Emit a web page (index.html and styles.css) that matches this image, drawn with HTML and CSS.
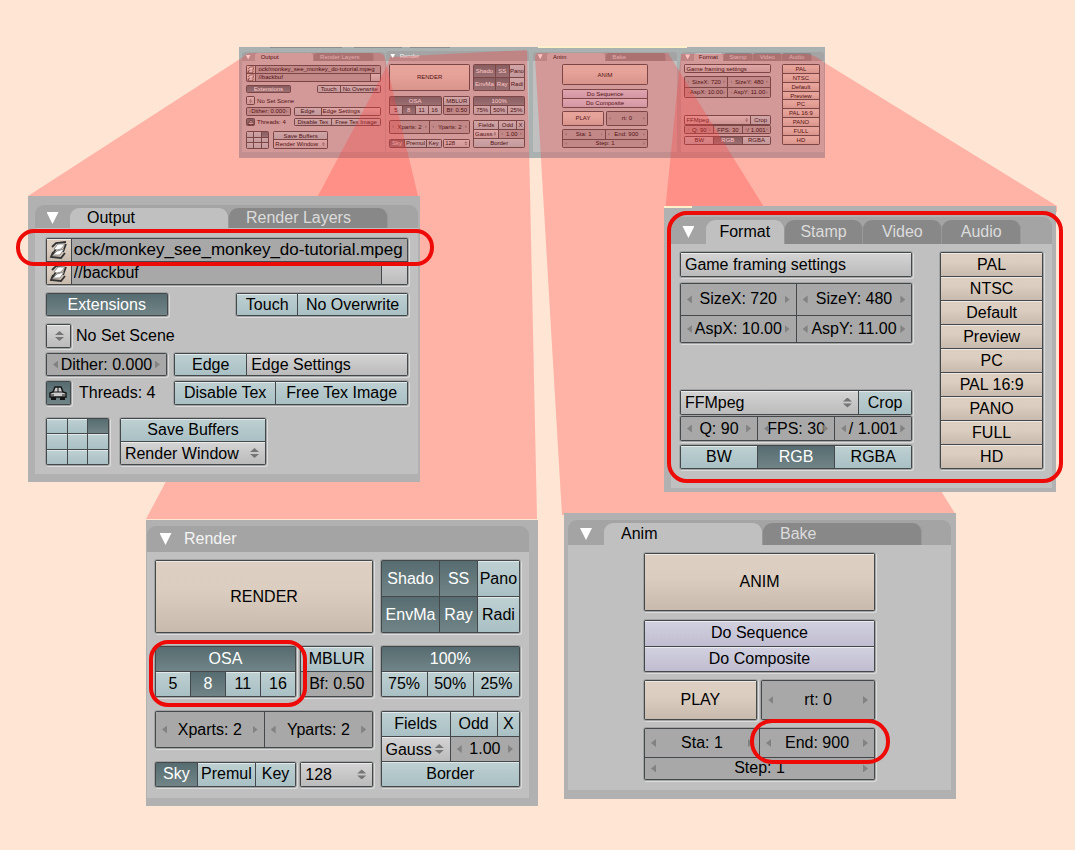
FILE: index.html
```html
<!DOCTYPE html>
<html lang="en">
<head>
<meta charset="utf-8">
<title>Render buttons overview</title>
<link rel="stylesheet" href="styles.css">
</head>
<body>
<main class="scene">
  <div class="strip"></div>

  <svg class="layer" width="1075" height="850" aria-hidden="true">
    <rect x="538" y="46" width="149" height="2" fill="#fff0cc"/>
    <path d="M270 47.500H342M354 47.500H402M410 47.500H450" stroke="#8e8e8e"/>
    <g fill="#ff4040" fill-opacity=".3">
      <path d="M28 196 243 57Q246 53 252 53L378 53Q384 53 385 58L418 196V205H28Z"/>
      <path d="M390 57 527 50 537 519H146L387 66Z"/>
      <path d="M535 57Q535 53 540 53H668L956 515H562Z"/>
      <path d="M681 54 806 54Q816 55 825 63L1057 206V212H665L679 72Z"/>
    </g>
  </svg>

  <section class="callout at-output">
    <div class="panel output">
      <div class="head tabs">
        <button class="fold" aria-label="Collapse"></button>
        <button class="tab on">Output</button>
        <button class="tab">Render Layers</button>
      </div>
      <div class="body">
        <div class="group paths">
          <button class="sand" aria-label="Browse output"><svg class="icon" viewBox="0 0 20 20"><path d="M3 7 7 3 17 2M4 12 2 17 12 18 16 13M3 15 7 9M17 4 14 12" fill="none" stroke="#333" stroke-width="1.800"/><path d="M5 9 9 4 16 4 12 9 8 10zM4 15 8 11 15 9 11 15z" fill="#fff" stroke="#777" stroke-width=".8"/></svg></button>
          <input class="field path" aria-label="Output path" value="ock/monkey_see_monkey_do-tutorial.mpeg">
          <button class="sand" aria-label="Browse backbuf"><svg class="icon" viewBox="0 0 20 20"><path d="M3 7 7 3 17 2M4 12 2 17 12 18 16 13M3 15 7 9M17 4 14 12" fill="none" stroke="#333" stroke-width="1.800"/><path d="M5 9 9 4 16 4 12 9 8 10zM4 15 8 11 15 9 11 15z" fill="#fff" stroke="#777" stroke-width=".8"/></svg></button>
          <input class="field" aria-label="Backbuf path" value="//backbuf">
          <button class="menu" aria-label="Use backbuf"></button>
        </div>
        <div class="row ext">
          <div class="group"><button class="on">Extensions</button></div>
          <div class="group c-touch"><button>Touch</button><button>No Overwrite</button></div>
        </div>
        <div class="row scene-row">
          <div class="group"><button class="menu updown" aria-label="Choose scene"></button></div>
          <span class="note">No Set Scene</span>
        </div>
        <div class="row pair">
          <div class="group"><span class="num wide"><input aria-label="Dither" value="Dither: 0.000"></span></div>
          <div class="group c-edge"><button>Edge</button><button class="menu left">Edge Settings</button></div>
        </div>
        <div class="row pair">
          <div class="row threads">
            <div class="group"><button class="on" aria-label="Auto threads"><svg class="icon" viewBox="0 0 20 20"><path d="M5 9 7 4h6l2 5 3 1v4H2v-4z" fill="#ccc" stroke="#151515" stroke-width="1.500"/><path d="M10 4v5M5 9h10M3 12h3M14 12h3" stroke="#151515"/><path d="M3 14h5v3H3zM12 14h5v3h-5z" fill="#151515"/></svg></button></div>
            <span class="note">Threads: 4</span>
          </div>
          <div class="group c-tex"><button>Disable Tex</button><button>Free Tex Image</button></div>
        </div>
        <div class="row last">
          <div class="group nine">
            <button aria-label="Top left"></button><button aria-label="Top"></button><button class="on" aria-label="Top right"></button>
            <button aria-label="Left"></button><button aria-label="Centre"></button><button aria-label="Right"></button>
            <button aria-label="Bottom left"></button><button aria-label="Bottom"></button><button aria-label="Bottom right"></button>
          </div>
          <div class="group">
            <button>Save Buffers</button>
            <span class="menu updown"><select aria-label="Display"><option>Render Window</option></select></span>
          </div>
        </div>
      </div>
    </div>
  </section>

  <section class="callout at-render">
    <div class="panel render">
      <div class="head plain">
        <button class="fold" aria-label="Collapse"></button>
        <span class="title">Render</span>
      </div>
      <div class="body">
        <div class="row halves">
          <div class="group"><button class="sand">RENDER</button></div>
          <div class="group c-opts">
            <button class="on">Shado</button><button class="on">SS</button><button>Pano</button>
            <button class="on">EnvMa</button><button class="on">Ray</button><button>Radi</button>
          </div>
        </div>
        <div class="row halves">
          <div class="row osa-row">
            <div class="group osa"><button class="on all">OSA</button><button>5</button><button class="on">8</button><button>11</button><button>16</button></div>
            <div class="group"><button>MBLUR</button><span class="num flat"><input aria-label="Blur factor" value="Bf: 0.50"></span></div>
          </div>
          <div class="group thirds"><button class="on all">100%</button><button>75%</button><button>50%</button><button>25%</button></div>
        </div>
        <div class="row halves">
          <div class="stack">
            <div class="group two"><span class="num"><input aria-label="X parts" value="Xparts: 2"></span><span class="num"><input aria-label="Y parts" value="Yparts: 2"></span></div>
            <div class="row osa-row">
              <div class="group c-sky"><button class="on">Sky</button><button>Premul</button><button>Key</button></div>
              <div class="group"><span class="menu updown"><select aria-label="Octree"><option>128</option></select></span></div>
            </div>
          </div>
          <div class="group c-fields">
            <button>Fields</button><button>Odd</button><button>X</button>
            <span class="menu updown"><select aria-label="Filter"><option>Gauss</option></select></span>
            <span class="num filter"><input aria-label="Filter size" value="1.00"></span>
            <button class="all">Border</button>
          </div>
        </div>
      </div>
    </div>
  </section>

  <section class="callout at-anim">
    <div class="panel anim">
      <div class="head tabs">
        <button class="fold" aria-label="Collapse"></button>
        <button class="tab on">Anim</button>
        <button class="tab">Bake</button>
      </div>
      <div class="body">
        <div class="group"><button class="sand">ANIM</button></div>
        <div class="group"><button class="lilac">Do Sequence</button><button class="lilac">Do Composite</button></div>
        <div class="row play">
          <div class="group"><button class="sand">PLAY</button></div>
          <div class="group"><span class="num"><input aria-label="rt" value="rt: 0"></span></div>
        </div>
        <div class="group frames">
          <span class="num"><input aria-label="Start frame" value="Sta: 1"></span>
          <span class="num"><input aria-label="End frame" value="End: 900"></span>
          <span class="num all"><input aria-label="Step" value="Step: 1"></span>
        </div>
      </div>
    </div>
  </section>

  <section class="callout at-format">
    <div class="panel format">
      <div class="head tabs">
        <button class="fold" aria-label="Collapse"></button>
        <button class="tab on">Format</button>
        <button class="tab">Stamp</button>
        <button class="tab">Video</button>
        <button class="tab">Audio</button>
      </div>
      <div class="body">
        <div class="sizes">
          <div class="group"><button class="menu left">Game framing settings</button></div>
          <div class="group dims">
            <span class="num"><input aria-label="Size X" value="SizeX: 720"></span><span class="num"><input aria-label="Size Y" value="SizeY: 480"></span>
            <span class="num"><input aria-label="Aspect X" value="AspX: 10.00"></span><span class="num"><input aria-label="Aspect Y" value="AspY: 11.00"></span>
          </div>
          <div class="group c-codec"><span class="menu updown"><select aria-label="Codec"><option>FFMpeg</option></select></span><button>Crop</button></div>
          <div class="group thirds"><span class="num"><input aria-label="Quality" value="Q: 90"></span><span class="num"><input aria-label="Frames per second" value="FPS: 30"></span><span class="num"><input aria-label="Frame base" value="/ 1.001"></span></div>
          <div class="group thirds"><button>BW</button><button class="on">RGB</button><button>RGBA</button></div>
        </div>
        <div class="group presets">
          <button class="sand">PAL</button><button class="sand">NTSC</button><button class="sand">Default</button>
          <button class="sand">Preview</button><button class="sand">PC</button><button class="sand">PAL 16:9</button>
          <button class="sand">PANO</button><button class="sand">FULL</button><button class="sand">HD</button>
        </div>
      </div>
    </div>
  </section>

  <svg class="layer" width="1075" height="850" aria-hidden="true">
    <path d="M664 207H692" stroke="#fff0cc" stroke-width="2"/>
    <g fill="none" stroke="#ee0a06" stroke-width="4">
      <rect x="18" y="231" width="414" height="33" rx="16"/>
      <rect x="151" y="642" width="154" height="63" rx="17"/>
      <rect x="752" y="721" width="136" height="41" rx="20"/>
      <rect x="669" y="213" width="392" height="268" rx="18"/>
    </g>
  </svg>
</main>
<script src="strip.js"></script>
</body>
</html>
```
FILE: styles.css
```css
* { box-sizing: border-box; }

body {
  margin: 0;
  background: #ffe5d4;
  color: #000;
}

button, input, select {
  font: inherit;
  color: inherit;
  border: 0;
  margin: 0;
  padding: 0;
  min-width: 0;
  min-height: 0;
  width: 100%;
  height: 100%;
  background: none;
  border-radius: 0;
  appearance: none;
}

button {
  overflow: hidden;
  white-space: nowrap;
}

.scene {
  position: relative;
  min-height: 850px;
  overflow: hidden;
  font-family: "Liberation Sans", Arial, sans-serif;
}

.layer {
  position: absolute;
  left: 0;
  top: 0;
  pointer-events: none;
}

/* Places on the canvas */
.callout {
  position: absolute;
  width: 392px;
  height: 286px;
  font-size: 16px;
  --line: 1px;
  --pad: 4px;
  --tab-pad: 17px;
  --tab-top: 3px;
  --radius: 9px;
  --arrow-w: 5px;
  --arrow-h: 8px;
  --arrow-in: 6px;
  --ud-w: 9px;
  --ud-h: 10px;
  --fold-w: 12px;
  --fold-h: 12px;
  --icon: 20px;
}
.at-output { left: 28px; top: 196px; }
.at-render { left: 146px; top: 520px; }
.at-anim { left: 564px; top: 513px; }
.at-format { left: 664px; top: 206px; }

.strip {
  position: absolute;
  left: 239px;
  top: 47px;
  width: 586px;
  height: 111px;
  padding: 2px 0 3px;
  display: grid;
  grid-template-columns: repeat(4, minmax(0, 1fr));
  background: #a9b1b1;
  font-size: 6px;
  --line: 1px;
  --pad: 1px;
  --tab-pad: 6px;
  --tab-top: 1px;
  --radius: 3px;
  --arrow-w: 2px;
  --arrow-h: 3px;
  --arrow-in: 2px;
  --ud-w: 3px;
  --ud-h: 4px;
  --fold-w: 5px;
  --fold-h: 5px;
  --icon: 8px;
}

/* Panel frame */
.panel {
  height: 100%;
  display: grid;
  background: #b1b1b1;
}
.strip .panel { background: #a9b1b1; }
.head { grid-area: 2 / 2; background: #a4a4a4; border-radius: var(--radius) var(--radius) 0 0; }
.body { grid-area: 3 / 2; background: #c0c0c0; display: grid; }

.output { grid-template: 9fr 23fr 246fr 8fr / 7fr 383fr 2fr; }
.render { grid-template: 6fr 26fr 246fr 8fr / 1fr 382fr 9fr; }
.anim { grid-template: 7fr 25fr 245fr 9fr / 4fr 383fr 5fr; }
.format { grid-template: 11fr 27fr 244fr 4fr / 7fr 382fr 4fr; }
.strip .format { grid-template-rows: 7fr 26fr 244fr 9fr; }
.panel, .panel * { min-width: 0; min-height: 0; }

.head { display: grid; }
.tabs { padding-top: var(--tab-top); }
.output .head { grid-template-columns: 35fr 159fr 159fr 30fr; }
.anim .head { grid-template-columns: 36fr 159fr 159fr 29fr; }
.format .head { grid-template-columns: 35fr 79fr 79fr 79fr 79fr 31fr; }
.render .head { grid-template-columns: 37fr 345fr; }
.plain { align-items: center; }

.fold::before {
  content: "";
  display: block;
  width: var(--fold-w);
  height: var(--fold-h);
  margin: 0 auto;
  background: #fff;
  clip-path: polygon(0 0, 100% 0, 50% 100%);
}
.tab {
  padding-left: var(--tab-pad);
  text-align: left;
  background: #888;
  color: #dcdcdc;
  border-radius: var(--radius) var(--radius) 0 0;
  border-right: var(--line) solid #999;
}
.tab.on { background: #c0c0c0; color: #000; }
.format .tab { padding: 0; text-align: center; }
.title { color: #f4f4f4; }

/* Controls */
.group {
  display: grid;
  grid-auto-rows: minmax(0, 1fr);
  gap: var(--line);
  padding: var(--line);
  background: #44484a;
  border-radius: 2px;
}
.callout .group { box-shadow: 0 0 0 1px #a2a4a4, 1px 1px 0 1px #dcdcdc; }

.group button { background: linear-gradient(#bed0d2, #a9c0c4); }
.group button.on { background: linear-gradient(#576c70, #718588); color: #fff; }
.group button.sand { background: linear-gradient(#ddd0c3, #dbcdc0 40%, #c8baac); }
.group button.lilac { background: linear-gradient(#d2d1e0, #bfbdcf); }
.group .menu { background: linear-gradient(#d4d4d4, #bbb); }
.callout .group button:not(.on), .callout .menu { box-shadow: inset 0 1px #ffffff88; }
.group .left { text-align: left; padding-left: var(--pad); }

.field {
  background: #a8a8a8;
  padding-left: 2px;
}
.num {
  position: relative;
  background: #a8a8a8;
}
.num input { text-align: center; display: block; }
.num::before, .num::after {
  content: "";
  position: absolute;
  top: 50%;
  width: var(--arrow-w);
  height: var(--arrow-h);
  margin-top: calc(var(--arrow-h) / -2);
  background: #828282;
}
.num::before { left: var(--arrow-in); clip-path: polygon(100% 0, 100% 100%, 0 50%); }
.num::after { right: var(--arrow-in); clip-path: polygon(0 0, 100% 50%, 0 100%); }
.flat::before, .flat::after { content: none; }

.menu { position: relative; }
.menu select { padding-left: var(--pad); display: block; }
.updown::after {
  content: "";
  position: absolute;
  top: 50%;
  right: var(--arrow-in);
  width: var(--ud-w);
  height: var(--ud-h);
  margin-top: calc(var(--ud-h) / -2);
  background: #757575;
  clip-path: polygon(50% 0, 100% 40%, 0 40%, 0 60%, 100% 60%, 50% 100%, 0 60%, 0 40%);
}
.icon { display: block; width: var(--icon); height: var(--icon); margin: 0 auto; }
.note { align-self: center; padding-left: var(--pad); white-space: nowrap; }
.all { grid-column: 1 / -1; }
.row { display: grid; }

/* Output */
.output .body {
  grid-template: 10fr 47fr 8fr 23fr 8fr 24fr 5fr 23fr 5fr 24fr 13fr 47fr 9fr / 11fr 362fr 10fr;
}
.body > * { grid-column: 2; grid-row: 2; }
.body > :nth-child(2) { grid-row: 4; }
.body > :nth-child(3) { grid-row: 6; }
.body > :nth-child(4) { grid-row: 8; }
.body > :nth-child(5) { grid-row: 10; }
.body > :nth-child(6) { grid-row: 12; }
.paths { grid-template-columns: 24fr 311fr 25fr; }
.path { grid-column: span 2; }
.callout .path { font-size: 17px; }
.ext { grid-template-columns: 121fr 171fr; column-gap: 19%; }
.c-touch { grid-template-columns: 60fr 109fr; }
.scene-row { grid-template-columns: 25fr 337fr; }
.scene-row .note, .threads .note { padding-left: calc(var(--pad) + 1px); }
.pair { grid-template-columns: 121fr 234fr; column-gap: 2%; }
.c-edge { grid-template-columns: 72fr 162fr; }
.threads { grid-template-columns: 25fr 96fr; }
.callout .threads .note { padding-left: 8px; }
.c-tex { grid-template-columns: 101fr 132fr; }
.last { grid-template-columns: 63fr 146fr 131fr; column-gap: 3%; }
.nine { grid-template-columns: repeat(3, minmax(0, 1fr)); }

/* Render */
.render .body { grid-template: 8fr 73fr 13fr 51fr 14fr 76fr 11fr / 8fr 365fr 9fr; }
.halves { grid-template-columns: 219fr 140fr; column-gap: 2%; }
.c-opts { grid-template-columns: 59fr 37fr 42fr; }
.osa-row { grid-template-columns: 141fr 73fr; column-gap: 2%; }
.osa { grid-template-columns: repeat(4, minmax(0, 1fr)); }
.thirds { grid-template-columns: repeat(3, minmax(0, 1fr)); }
.stack { display: grid; grid-template-rows: 37fr 25fr; row-gap: 18%; }
.two { grid-template-columns: repeat(2, minmax(0, 1fr)); }
.c-sky { grid-template-columns: 41fr 58fr 39fr; }
.c-fields { grid-template-columns: 70fr 47fr 22fr; }
.filter { grid-column: span 2; }

/* Anim */
.anim .body { grid-template: 8fr 58fr 9fr 52fr 8fr 40fr 8fr 52fr 10fr / 76fr 231fr 76fr; }
.play { grid-template-columns: 113fr 114fr; column-gap: 2%; }
.frames { grid-template: 29fr 22fr / 1fr 1fr; }

/* Format */
.format .body { grid-template: 8fr 217fr 19fr / 9fr 233fr 28fr 103fr 9fr; }
.format .presets { grid-area: 2 / 4; }
.sizes { display: grid; grid-template-rows: 25fr 6fr 60fr 47fr 25fr 1fr 25fr 4fr 24fr; }
.sizes > :nth-child(2) { grid-row: 3; }
.sizes > :nth-child(3) { grid-row: 5; }
.sizes > :nth-child(4) { grid-row: 7; }
.sizes > :nth-child(5) { grid-row: 9; }
.dims { grid-template: 32fr 27fr / 1fr 1fr; }
.c-codec { grid-template-columns: 179fr 53fr; }
```
FILE: strip.js
```js
// The strip holds a small copy of every panel.
const strip = document.querySelector('.strip');
document.querySelectorAll('.callout .panel').forEach((panel) => {
  strip.append(panel.cloneNode(true));
});
```
